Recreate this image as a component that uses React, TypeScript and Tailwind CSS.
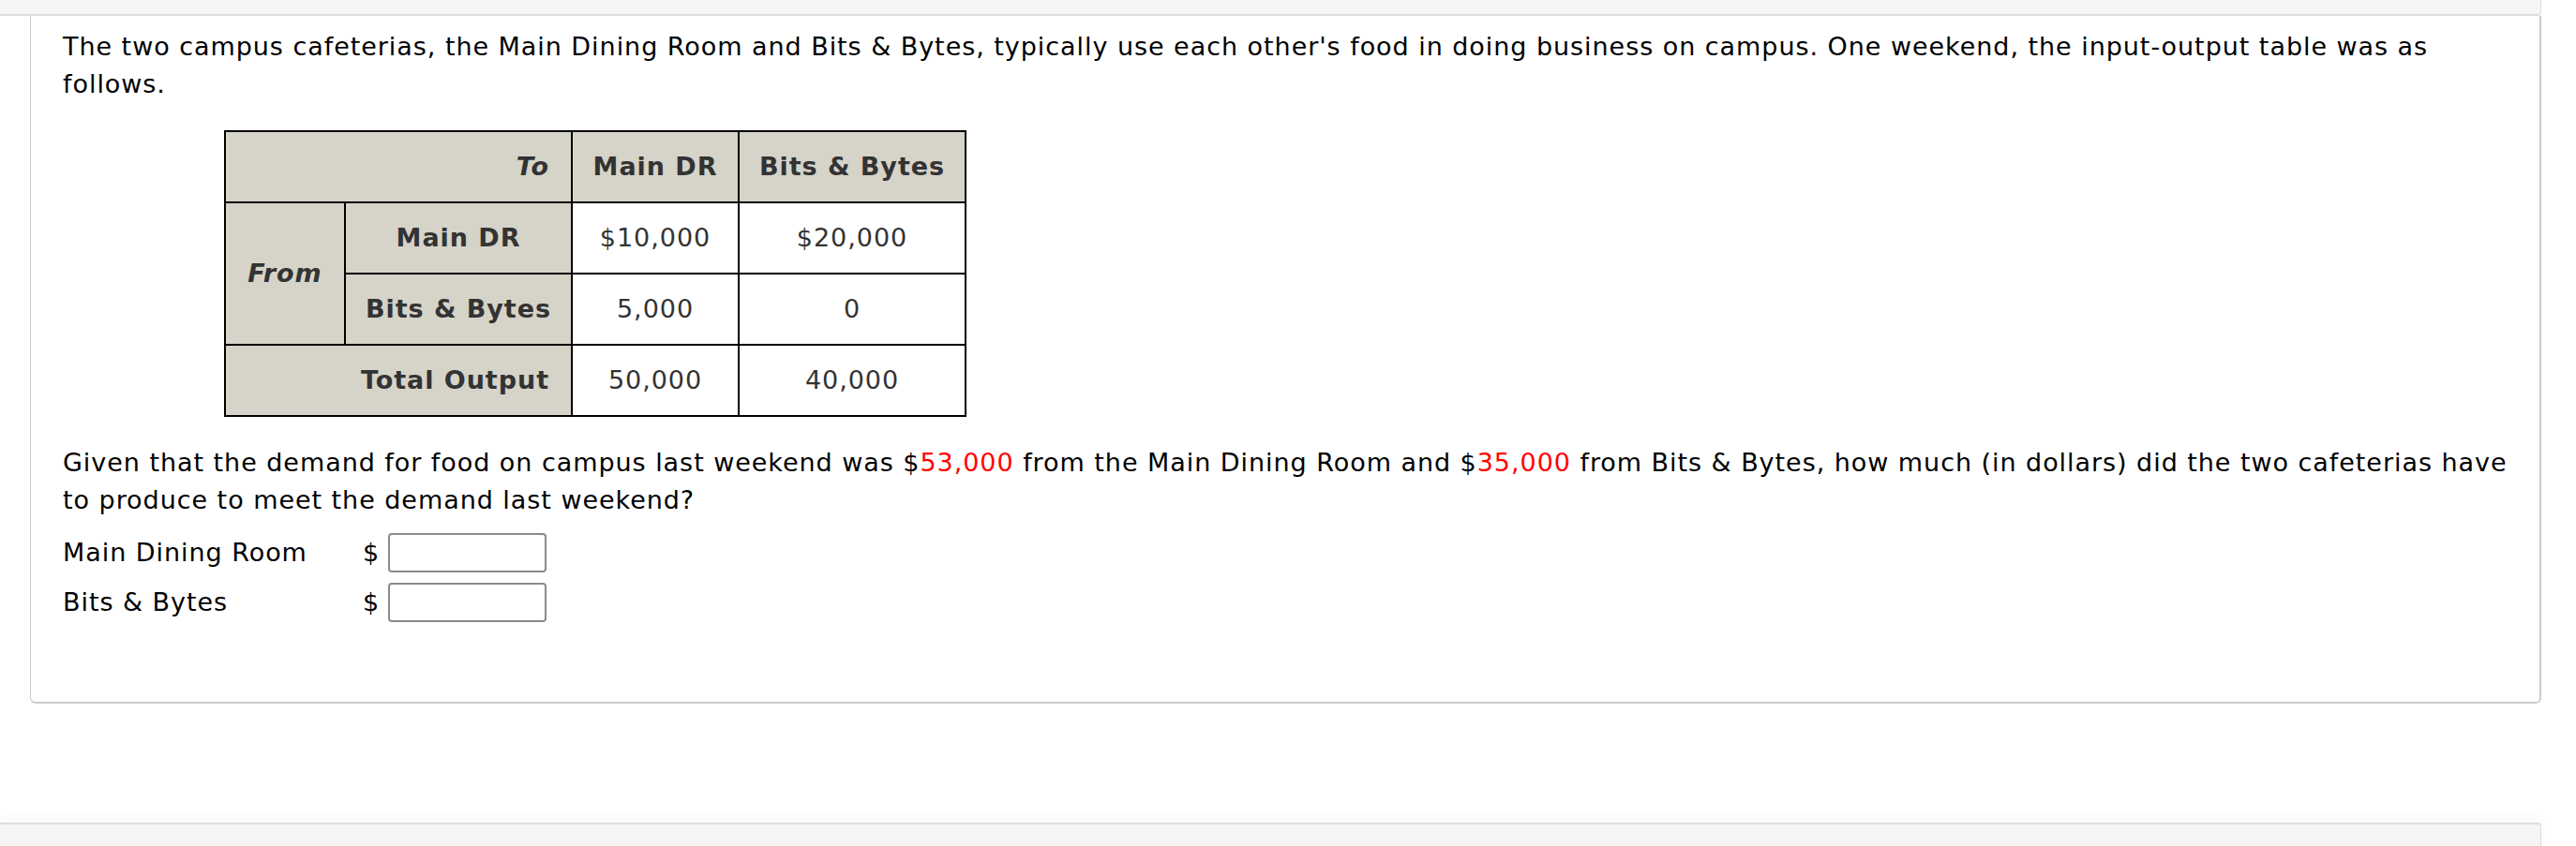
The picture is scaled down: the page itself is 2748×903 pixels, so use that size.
import React from 'react';

const headCell = 'bg-[#d6d3c8] border-2 border-black font-bold text-[#333]';
const dataCell = 'bg-white border-2 border-black text-center text-[#333]';

const Red: React.FC<{ children: React.ReactNode }> = ({ children }) => (
  <span className="text-[#ff0000]">{children}</span>
);

const AnswerRow: React.FC<{ label: string }> = ({ label }) => (
  <div className="flex items-center h-[42px]">
    <span className="w-[320px]">{label}</span>
    <span className="w-[27px]">$</span>
    <input
      type="text"
      className="w-[169px] h-[42px] border-2 border-[#8a8a8a] rounded-[4px] bg-white outline-none"
    />
  </div>
);

export default function App() {
  return (
    <div className="w-[2748px] h-[903px] bg-white overflow-hidden font-['Verdana','DejaVu_Sans',sans-serif] text-black tracking-[0.95px]">
      {/* strip above the question */}
      <div className="h-[17px] w-[2711px] bg-[#f5f5f5] border-b-2 border-r border-[#dddddd] rounded-br-[4px]" />

      <div className="ml-[32px] w-[2679px] h-[734px] border-l border-r-2 border-b-2 border-[#cccccc] rounded-b-[6px] pl-[34px] pr-[32px] pt-[13px] text-[27px] leading-[40px]">
        <p>
          The two campus cafeterias, the Main Dining Room and Bits &amp; Bytes, typically use each other's food in
          doing business on campus. One weekend, the input-output table was as follows.
        </p>

        <table className="mt-[29px] ml-[172px] table-fixed border-collapse w-[790px]">
          <colgroup>
            <col className="w-[128px]" />
            <col className="w-[242px]" />
            <col className="w-[178px]" />
            <col className="w-[242px]" />
          </colgroup>
          <tbody>
            <tr className="h-[76px]">
              <td colSpan={2} className={`${headCell} text-right pr-[23px] italic`}>To</td>
              <td className={`${headCell} text-center`}>Main DR</td>
              <td className={`${headCell} text-center`}>Bits &amp; Bytes</td>
            </tr>
            <tr className="h-[76px]">
              <td rowSpan={2} className={`${headCell} text-center italic`}>From</td>
              <td className={`${headCell} text-center`}>Main DR</td>
              <td className={dataCell}>$10,000</td>
              <td className={dataCell}>$20,000</td>
            </tr>
            <tr className="h-[76px]">
              <td className={`${headCell} text-center`}>Bits &amp; Bytes</td>
              <td className={dataCell}>5,000</td>
              <td className={dataCell}>0</td>
            </tr>
            <tr className="h-[76px]">
              <td colSpan={2} className={`${headCell} text-right pr-[23px]`}>Total Output</td>
              <td className={dataCell}>50,000</td>
              <td className={dataCell}>40,000</td>
            </tr>
          </tbody>
        </table>

        <p className="mt-[29px]">
          Given that the demand for food on campus last weekend was $<Red>53,000</Red> from the Main Dining Room and
          $<Red>35,000</Red> from Bits &amp; Bytes, how much (in dollars) did the two cafeterias have to produce to
          meet the demand last weekend?
        </p>

        <div className="mt-[15px] flex flex-col gap-[11px]">
          <AnswerRow label="Main Dining Room" />
          <AnswerRow label="Bits & Bytes" />
        </div>
      </div>

      {/* next question panel, cut off at the bottom */}
      <div className="mt-[127px] w-[2711px] h-[30px] bg-[#f5f5f5] border-t-2 border-r border-[#dddddd] rounded-tr-[4px] shadow-[0_-6px_14px_rgba(0,0,0,0.03)]" />
    </div>
  );
}
